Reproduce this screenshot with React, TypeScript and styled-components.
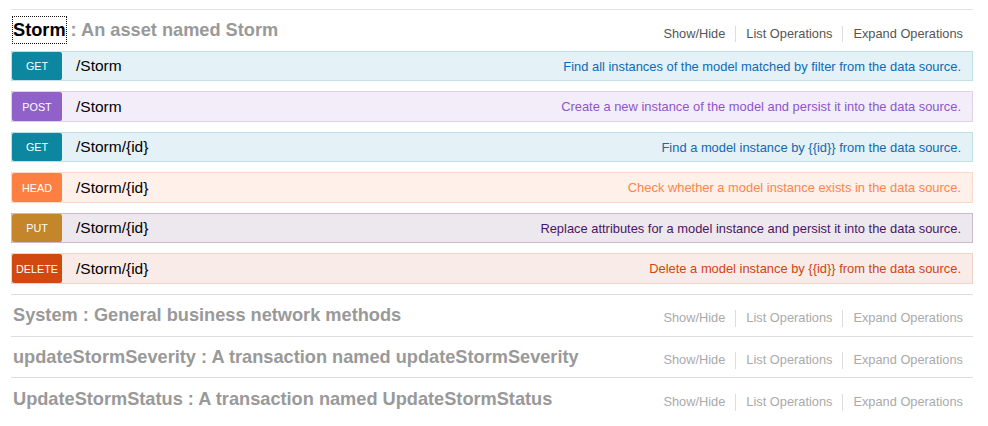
import React from "react";
import styled, { createGlobalStyle, css } from "styled-components";

const Global = createGlobalStyle`
  html, body { margin: 0; padding: 0; background: #ffffff; }
  body { font-family: "Liberation Sans", Arial, Helvetica, sans-serif; color: #000; }
  * { box-sizing: border-box; }
`;

type Method = "get" | "post" | "head" | "put" | "delete";

const palette: Record<Method, { badge: string; bg: string; border: string; text: string }> = {
  get: { badge: "#0d869f", bg: "#e4f1f6", border: "#c0e0e8", text: "#0f6ab4" },
  post: { badge: "#9062c9", bg: "#f3edf9", border: "#dfd0f0", text: "#8d56c9" },
  head: { badge: "#fd7f42", bg: "#fff0ea", border: "#fdd9ca", text: "#fd8649" },
  put: { badge: "#c4862b", bg: "#ede8ee", border: "#cbb9d4", text: "#4b1565" },
  delete: { badge: "#d24811", bg: "#f9ece8", border: "#f3d3c8", text: "#cf4510" },
};

const Page = styled.div`
  padding: 9px 15px 0 11px;
  width: 988px;
`;

const Resources = styled.ul`
  list-style: none;
  margin: 0;
  padding: 0;
  width: 962px;
  border-top: 1px solid #e2e2e2;
`;

const Resource = styled.li<{ $last?: boolean }>`
  border-bottom: 1px solid #dddddd;
  ${(p) => p.$last && css`padding-bottom: 7px;`}
`;

const Heading = styled.div`
  display: flex;
  justify-content: space-between;
  align-items: flex-start;
  height: 40.8px;
`;

const Title = styled.h2`
  margin: 0;
  align-self: center;
  padding-left: 2px;
  font-size: 18.2px;
  font-weight: bold;
  line-height: 26px;
  color: #999999;
  white-space: nowrap;
`;

const NameLink = styled.a<{ $active?: boolean }>`
  display: inline-block;
  color: ${(p) => (p.$active ? "#000000" : "#999999")};
  text-decoration: none;
  ${(p) => p.$active && css`outline: 1px dotted #111;`}
`;

const Options = styled.ul`
  list-style: none;
  display: flex;
  margin: 15.5px 0 0 0;
  padding: 0;
`;

const Option = styled.li<{ $active?: boolean }>`
  padding: 2px 10px;
  font-size: 12.8px;
  line-height: 12.7px;
  color: ${(p) => (p.$active ? "#555555" : "#aaaaaa")};
  border-right: 1px solid #dddddd;
  &:last-child { border-right: none; }
`;

const Operations = styled.ul`
  list-style: none;
  margin: 0;
  padding: 0 0 10px 0;
  display: flex;
  flex-direction: column;
  gap: 10px;
`;

const Operation = styled.li<{ $m: Method }>`
  display: flex;
  align-items: stretch;
  height: 30.5px;
  background: ${(p) => palette[p.$m].bg};
  border: 1px solid ${(p) => palette[p.$m].border};
`;

const Badge = styled.span<{ $m: Method }>`
  width: 50px;
  flex: none;
  display: flex;
  align-items: center;
  justify-content: center;
  background: ${(p) => palette[p.$m].badge};
  color: #ffffff;
  border-radius: 2px;
  font-size: 10.8px;
  text-transform: uppercase;
`;

const Path = styled.span`
  margin-left: 14px;
  align-self: center;
  font-size: 15.5px;
  color: #000000;
`;

const Summary = styled.span<{ $m: Method }>`
  margin-left: auto;
  padding-right: 11px;
  align-self: center;
  font-size: 12.9px;
  color: ${(p) => palette[p.$m].text};
`;

const ops: { m: Method; path: string; summary: string }[] = [
  { m: "get", path: "/Storm", summary: "Find all instances of the model matched by filter from the data source." },
  { m: "post", path: "/Storm", summary: "Create a new instance of the model and persist it into the data source." },
  { m: "get", path: "/Storm/{id}", summary: "Find a model instance by {{id}} from the data source." },
  { m: "head", path: "/Storm/{id}", summary: "Check whether a model instance exists in the data source." },
  { m: "put", path: "/Storm/{id}", summary: "Replace attributes for a model instance and persist it into the data source." },
  { m: "delete", path: "/Storm/{id}", summary: "Delete a model instance by {{id}} from the data source." },
];

const resources = [
  { name: "Storm", desc: "An asset named Storm", active: true, ops },
  { name: "System", desc: "General business network methods", active: false, ops: [] },
  { name: "updateStormSeverity", desc: "A transaction named updateStormSeverity", active: false, ops: [] },
  { name: "UpdateStormStatus", desc: "A transaction named UpdateStormStatus", active: false, ops: [] },
];

const optionLabels = ["Show/Hide", "List Operations", "Expand Operations"];

export default function App() {
  return (
    <>
      <Global />
      <Page>
        <Resources>
          {resources.map((r, i) => (
            <Resource key={r.name} $last={i === resources.length - 1}>
              <Heading>
                <Title>
                  <NameLink $active={r.active}>{r.name}</NameLink> : {r.desc}
                </Title>
                <Options>
                  {optionLabels.map((o) => (
                    <Option key={o} $active={r.active}>{o}</Option>
                  ))}
                </Options>
              </Heading>
              {r.ops.length > 0 && (
                <Operations>
                  {r.ops.map((op, j) => (
                    <Operation key={j} $m={op.m}>
                      <Badge $m={op.m}>{op.m}</Badge>
                      <Path>{op.path}</Path>
                      <Summary $m={op.m}>{op.summary}</Summary>
                    </Operation>
                  ))}
                </Operations>
              )}
            </Resource>
          ))}
        </Resources>
      </Page>
    </>
  );
}
